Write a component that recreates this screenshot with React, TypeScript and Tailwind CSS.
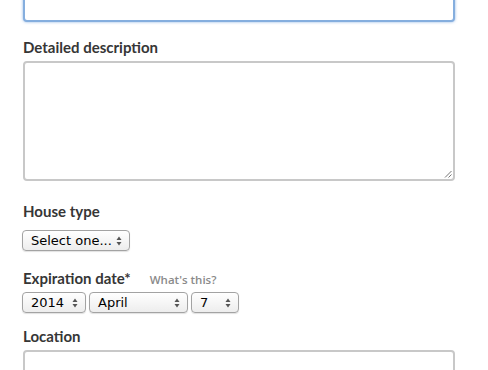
import React from "react";

const LABEL = "text-[15px] font-bold leading-5 text-[#363636] [font-family:Lato,'Open_Sans',sans-serif]";

function Arrows() {
  return (
    <svg width="6" height="10" viewBox="0 0 6 10" className="shrink-0">
      <path d="M3 0.5 L5.5 4 H0.5 Z" fill="#555" />
      <path d="M3 9.5 L5.5 6 H0.5 Z" fill="#555" />
    </svg>
  );
}

function FakeSelect({ value, width }: { value: string; width: string }) {
  return (
    <div
      className={`flex h-[21px] items-center justify-between rounded-[4px] border border-[#a3a3a3] bg-gradient-to-b from-white to-[#ededed] pl-[8px] pr-[7px] text-[13px] text-black shadow-[0_1px_1px_rgba(0,0,0,0.12)] [font-family:'DejaVu_Sans',sans-serif] ${width}`}
    >
      <span className="leading-none">{value}</span>
      <Arrows />
    </div>
  );
}

export default function App() {
  return (
    <div className="h-[370px] w-[488px] overflow-hidden bg-white pl-[23px]">
      <div className="w-[432px]">
        {/* Title field (focused) */}
        <div className="-mt-[14px] h-[36px] rounded-[4px] border-2 border-[#85aede] bg-white shadow-[0_0_3px_rgba(90,145,215,0.7)]" />

        <div className={`mt-[15px] ${LABEL}`}>Detailed description</div>
        <div className="relative mt-[4px] h-[120px] rounded-[4px] border-2 border-[#c8c8c8] bg-white">
          <svg width="8" height="8" viewBox="0 0 8 8" className="absolute bottom-[1px] right-[1px]">
            <path d="M7.5 1 L1 7.5 M7.5 4.5 L4.5 7.5" stroke="#777" strokeWidth="1" />
          </svg>
        </div>

        <div className={`mt-[20px] ${LABEL}`}>House type</div>
        <div className="-ml-px mt-[9px]">
          <FakeSelect value="Select one..." width="w-[108px]" />
        </div>

        <div className="mt-[17px] flex items-baseline gap-[19px]">
          <span className={LABEL}>Expiration date*</span>
          <span className="text-[11.5px] font-semibold text-[#8a8a8a] [font-family:'Open_Sans',sans-serif]">What's this?</span>
        </div>
        <div className="-ml-px mt-[4px] flex gap-[3px]">
          <FakeSelect value="2014" width="w-[64px]" />
          <FakeSelect value="April" width="w-[99px]" />
          <FakeSelect value="7" width="w-[48px]" />
        </div>

        <div className={`mt-[13px] ${LABEL}`}>Location</div>
        <div className="mt-[4px] h-[36px] rounded-[4px] border-2 border-[#c8c8c8] bg-white" />
      </div>
    </div>
  );
}
